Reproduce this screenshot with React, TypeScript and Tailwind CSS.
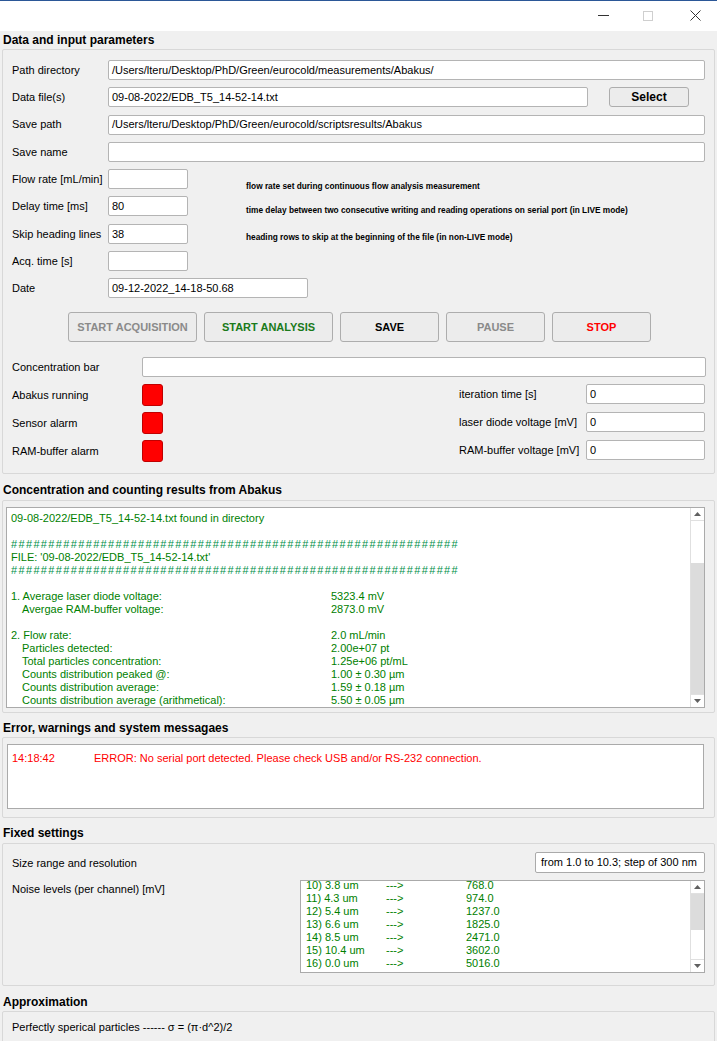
import React from "react";

const Input = ({ value = "", className = "" }: { value?: string; className?: string }) => (
  <div className={`h-[20px] bg-white border border-[#b4b4b4] rounded-[2px] pl-[3px] flex items-center text-[11px] text-black whitespace-nowrap overflow-hidden ${className}`}>
    {value}
  </div>
);

const Btn = ({ label, className = "" }: { label: string; className?: string }) => (
  <div className={`h-[30px] border border-[#adadad] rounded-[3px] bg-[#ececec] flex items-center justify-center text-[11px] font-bold ${className}`}>
    {label}
  </div>
);

const SectionTitle = ({ children }: { children: React.ReactNode }) => (
  <div className="pl-[3px] text-[12px] font-bold text-black leading-[14px]">{children}</div>
);

const Red = () => <div className="w-[21px] h-[22px] bg-[#ff0000] rounded-[3px] border border-[#c00000]" />;

const ScrollBar = ({ thumbTop, thumbH, grayTrack }: { thumbTop: number; thumbH: number; grayTrack?: boolean }) => (
  <div className="w-[14px] h-full flex flex-col border-l border-[#e0e0e0] bg-white">
    <div className="h-[13px] flex items-center justify-center border-b border-[#e0e0e0]">
      <svg width="7" height="4" viewBox="0 0 7 4"><path d="M0 4 L3.5 0 L7 4 Z" fill="#606060" /></svg>
    </div>
    <div className={`flex-1 flex flex-col ${grayTrack ? "bg-[#dcdcdc]" : "bg-white"}`}>
      <div style={{ height: thumbTop }} className={grayTrack ? "bg-white" : ""} />
      <div style={{ height: thumbH }} className="bg-[#dcdcdc]" />
    </div>
    <div className="h-[13px] flex items-center justify-center border-t border-[#e0e0e0]">
      <svg width="7" height="4" viewBox="0 0 7 4"><path d="M0 0 L3.5 4 L7 0 Z" fill="#606060" /></svg>
    </div>
  </div>
);

export default function App() {
  const hashes = "#".repeat(60);
  const res: [string, string, boolean][] = [
    ["1. Average laser diode voltage:", "5323.4 mV", false],
    ["Avergae RAM-buffer voltage:", "2873.0 mV", true],
  ];
  const res2: [string, string, boolean][] = [
    ["2. Flow rate:", "2.0 mL/min", false],
    ["Particles detected:", "2.00e+07 pt", true],
    ["Total particles concentration:", "1.25e+06 pt/mL", true],
    ["Counts distribution peaked @:", "1.00 ± 0.30 µm", true],
    ["Counts distribution average:", "1.59 ± 0.18 µm", true],
    ["Counts distribution average (arithmetical):", "5.50 ± 0.05 µm", true],
  ];
  const noise: [string, string][] = [
    ["10) 3.8 um", "768.0"],
    ["11) 4.3 um", "974.0"],
    ["12) 5.4 um", "1237.0"],
    ["13) 6.6 um", "1825.0"],
    ["14) 8.5 um", "2471.0"],
    ["15) 10.4 um", "3602.0"],
    ["16) 0.0 um", "5016.0"],
  ];

  return (
    <div className="w-[717px] h-[1041px] overflow-hidden bg-[#f0f0f0] font-['Liberation_Sans',Arial,sans-serif] text-black">
      {/* title bar */}
      <div className="h-[31px] bg-white border-t border-[#2b5797] flex items-center justify-end">
        <div className="flex items-center mr-[16px] -mt-[1px]">
          <div className="w-[11px] h-[1px] bg-[#333]" />
          <div className="w-[10px] h-[10px] border border-[#cfcfcf] ml-[34px]" />
          <svg className="ml-[37px]" width="11" height="11" viewBox="0 0 11 11">
            <path d="M0.5 0.5 L10.5 10.5 M10.5 0.5 L0.5 10.5" stroke="#333" strokeWidth="1" />
          </svg>
        </div>
      </div>

      {/* Data and input parameters */}
      <div className="pt-[2px]">
        <SectionTitle>Data and input parameters</SectionTitle>
      </div>
      <div className="mx-[2px] mt-[2px] h-[425px] border border-[#d8d8d8] rounded-[2px] pt-[10px] pr-[9px]">
        <div className="flex flex-col gap-[7.3px] text-[11px]">
          <div className="flex items-center">
            <div className="w-[105px] pl-[9px]">Path directory</div>
            <Input className="flex-1" value="/Users/lteru/Desktop/PhD/Green/eurocold/measurements/Abakus/" />
          </div>
          <div className="flex items-center">
            <div className="w-[105px] pl-[9px]">Data file(s)</div>
            <Input className="w-[480px]" value="09-08-2022/EDB_T5_14-52-14.txt" />
            <div className="ml-[21px] w-[80px] h-[20px] border border-[#adadad] rounded-[3px] bg-[#ececec] flex items-center justify-center text-[12px] font-bold">Select</div>
          </div>
          <div className="flex items-center">
            <div className="w-[105px] pl-[9px]">Save path</div>
            <Input className="flex-1" value="/Users/lteru/Desktop/PhD/Green/eurocold/scriptsresults/Abakus" />
          </div>
          <div className="flex items-center">
            <div className="w-[105px] pl-[9px]">Save name</div>
            <Input className="flex-1" />
          </div>
          <div className="flex items-start h-[20px]">
            <div className="w-[105px] pl-[9px] leading-[20px]">Flow rate [mL/min]</div>
            <Input className="w-[80px]" />
            <div className="ml-[58px] pt-[12px] text-[8.3px] font-bold leading-[10px] whitespace-nowrap">flow rate set during continuous flow analysis measurement</div>
          </div>
          <div className="flex items-start h-[20px]">
            <div className="w-[105px] pl-[9px] leading-[20px]">Delay time [ms]</div>
            <Input className="w-[80px]" value="80" />
            <div className="ml-[58px] pt-[9px] text-[8.3px] font-bold leading-[10px] whitespace-nowrap">time delay between two consecutive writing and reading operations on serial port (in LIVE mode)</div>
          </div>
          <div className="flex items-start h-[20px]">
            <div className="w-[105px] pl-[9px] leading-[20px]">Skip heading lines</div>
            <Input className="w-[80px]" value="38" />
            <div className="ml-[58px] pt-[8px] text-[8.3px] font-bold leading-[10px] whitespace-nowrap">heading rows to skip at the beginning of the file (in non-LIVE mode)</div>
          </div>
          <div className="flex items-center">
            <div className="w-[105px] pl-[9px]">Acq. time [s]</div>
            <Input className="w-[80px]" />
          </div>
          <div className="flex items-center">
            <div className="w-[105px] pl-[9px]">Date</div>
            <Input className="w-[200px]" value="09-12-2022_14-18-50.68" />
          </div>
        </div>

        <div className="flex gap-[7px] pl-[65px] mt-[14px]">
          <Btn label="START ACQUISITION" className="w-[129px] text-[#8a8a8a]" />
          <Btn label="START ANALYSIS" className="w-[129px] text-[#1a7a1a]" />
          <Btn label="SAVE" className="w-[99px] text-black" />
          <Btn label="PAUSE" className="w-[99px] text-[#8a8a8a]" />
          <Btn label="STOP" className="w-[99px] text-[#ff0000]" />
        </div>

        <div className="flex items-center mt-[15px] text-[11px]">
          <div className="w-[139px] pl-[9px]">Concentration bar</div>
          <Input className="flex-1 -mr-[1px]" />
        </div>

        <div className="flex mt-[7px] text-[11px]">
          <div className="flex flex-col gap-[6px]">
            {["Abakus running", "Sensor alarm", "RAM-buffer alarm"].map((l) => (
              <div key={l} className="flex items-center h-[22px]">
                <div className="w-[139px] pl-[9px]">{l}</div>
                <Red />
              </div>
            ))}
          </div>
          <div className="flex-1" />
          <div className="flex flex-col gap-[8px]">
            {["iteration time [s]", "laser diode voltage [mV]", "RAM-buffer voltage [mV]"].map((l) => (
              <div key={l} className="flex items-center h-[20px]">
                <div className="w-[127px]">{l}</div>
                <Input className="w-[119px]" value="0" />
              </div>
            ))}
          </div>
        </div>
      </div>

      {/* Concentration results */}
      <div className="mt-[9px]">
        <SectionTitle>Concentration and counting results from Abakus</SectionTitle>
      </div>
      <div className="mx-[2px] mt-[3px] h-[213px] border border-[#d8d8d8] rounded-[2px] pt-[6px] pl-[3px] pr-[9px]">
        <div className="h-[201px] bg-white border border-[#aaaaaa] flex text-[11px] text-[#008000]">
          <div className="flex-1 overflow-hidden pl-[4px] pt-[4px] leading-[13px]">
            <div>09-08-2022/EDB_T5_14-52-14.txt found in directory</div>
            <div>&nbsp;</div>
            <div className="tracking-[1.35px] text-[#00904a]">{hashes}</div>
            <div>FILE: '09-08-2022/EDB_T5_14-52-14.txt'</div>
            <div className="tracking-[1.35px] text-[#00904a]">{hashes}</div>
            <div>&nbsp;</div>
            {res.map(([a, b, ind]) => (
              <div key={a} className="flex whitespace-nowrap">
                <div className={`w-[320px] ${ind ? "pl-[11px]" : ""}`}>{a}</div>
                <div>{b}</div>
              </div>
            ))}
            <div>&nbsp;</div>
            {res2.map(([a, b, ind]) => (
              <div key={a} className="flex whitespace-nowrap">
                <div className={`w-[320px] ${ind ? "pl-[11px]" : ""}`}>{a}</div>
                <div>{b}</div>
              </div>
            ))}
          </div>
          <ScrollBar thumbTop={42} thumbH={128} grayTrack />
        </div>
      </div>

      {/* Error */}
      <div className="mt-[8px]">
        <SectionTitle>Error, warnings and system messagaes</SectionTitle>
      </div>
      <div className="mx-[2px] mt-[2px] h-[81px] border border-[#d8d8d8] rounded-[2px] pt-[6px] pl-[4px] pr-[10px]">
        <div className="h-[65px] bg-white border border-[#aaaaaa] text-[11px] text-[#ff0000] pl-[4px] pt-[5px] flex">
          <div className="w-[82px]">14:18:42</div>
          <div>ERROR: No serial port detected. Please check USB and/or RS-232 connection.</div>
        </div>
      </div>

      {/* Fixed settings */}
      <div className="mt-[8px]">
        <SectionTitle>Fixed settings</SectionTitle>
      </div>
      <div className="mx-[2px] mt-[3px] h-[143px] border border-[#d8d8d8] rounded-[2px] pt-[8px] pr-[9px] text-[11px]">
        <div className="flex items-center h-[21px]">
          <div className="flex-1 pl-[9px] pt-[2px]">Size range and resolution</div>
          <div className="w-[170px] h-[21px] bg-white border border-[#aaaaaa] rounded-[2px] flex items-center pl-[5px] whitespace-nowrap">from 1.0 to 10.3; step of 300 nm</div>
        </div>
        <div className="flex mt-[7px]">
          <div className="w-[297px] pl-[9px] pt-[1px]">Noise levels (per channel) [mV]</div>
          <div className="flex-1 h-[93px] bg-white border border-[#aaaaaa] flex">
            <div className="flex-1 overflow-hidden pl-[5px] text-[#008000] leading-[13px] -mt-[2px]">
              {noise.map(([a, b]) => (
                <div key={a} className="flex whitespace-nowrap">
                  <div className="w-[80px]">{a}</div>
                  <div className="w-[80px]">---&gt;</div>
                  <div>{b}</div>
                </div>
              ))}
            </div>
            <ScrollBar thumbTop={0} thumbH={36} />
          </div>
        </div>
      </div>

      {/* Approximation */}
      <div className="mt-[9px]">
        <SectionTitle>Approximation</SectionTitle>
      </div>
      <div className="mx-[2px] mt-[2px] h-[60px] border border-[#d8d8d8] rounded-[2px] pt-[7px] pl-[9px] text-[11px]">
        Perfectly sperical particles ------ σ = (π·d^2)/2
      </div>
    </div>
  );
}
